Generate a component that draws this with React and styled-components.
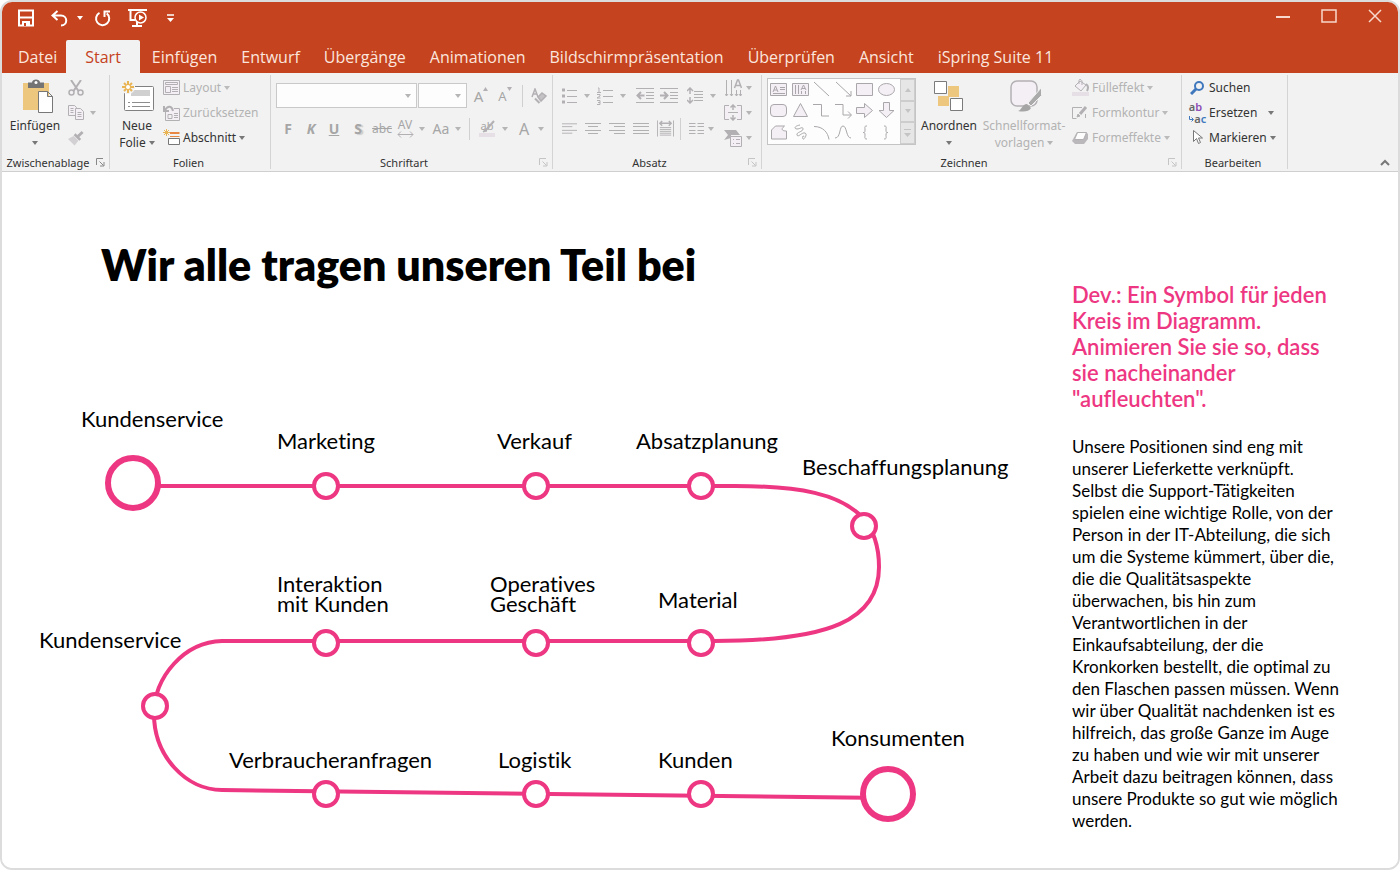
import React from 'react'
import styled, { createGlobalStyle, css } from 'styled-components'

const BRAND = '#c5431e'
const PINK = '#ee3782'
const GREY = '#b3b0b3'
const PALE = '#f4eff5'

const GlobalStyle = createGlobalStyle`
  * {
    box-sizing: border-box;
  }
  body {
    margin: 0;
    background: #fff;
    font-family: 'Noto Sans', sans-serif;
  }
  button,
  input {
    font: inherit;
  }
`

const plainButton = css`
  display: flex;
  align-items: center;
  margin: 0;
  padding: 0;
  border: 0;
  background: none;
  color: ${(p) => (p.$off ? '#b3b3b3' : '#333')};
  cursor: pointer;
`

const Window = styled.div`
  display: flex;
  flex-direction: column;
  min-height: 100vh;
  border: 2px solid #dcdcdc;
  border-radius: 12px;
  overflow: hidden;
`

const TitleBar = styled.header`
  display: flex;
  justify-content: space-between;
  height: 38px;
  padding: 0 14px 6px 9px;
  background: ${BRAND};
`

const QuickAccess = styled.div`
  display: flex;
  align-items: center;
`

const TitleButton = styled.button`
  ${plainButton}
  justify-content: center;
  width: ${(p) => p.$w}px;
`

const WindowButtons = styled.div`
  display: flex;
  align-items: center;
  gap: 28px;
  padding-bottom: 4px;
`

const Tabs = styled.nav`
  display: flex;
  height: 33px;
  padding-left: 4px;
  background: ${BRAND};
`

const Tab = styled.button`
  ${plainButton}
  padding: 0 ${(p) => (p.$active ? 19 : 12)}px;
  font-family: 'Open Sans', 'Noto Sans', sans-serif;
  font-size: 16px;
  line-height: 22px;
  white-space: nowrap;
  color: ${(p) => (p.$active ? BRAND : '#fbe6df')};
  background: ${(p) => (p.$active ? '#f2f2f2' : 'none')};
  border-radius: 2px 2px 0 0;

  &:first-child {
    padding-right: 9px;
  }
`

const RibbonBar = styled.div`
  display: flex;
  height: 99px;
  padding: 2px 0;
  background: #f2f2f2;
  border-bottom: 1px solid #cfcfcf;
`

const Group = styled.section`
  display: flex;
  flex-direction: column;
  flex: none;
  width: ${(p) => p.$w}px;
  border-right: 1px solid #d4d4d4;
`

const GroupBody = styled.div`
  display: flex;
  flex: none;
  height: 78px;
  padding-left: ${(p) => p.$pad || 0}px;
`

const GroupFoot = styled.footer`
  display: flex;
  align-items: center;
  height: 16px;
  margin-top: 1px;
  padding-right: 3px;
`

const GroupName = styled.span`
  flex: 1;
  padding-top: 2px;
  text-align: center;
  font-size: 11px;
  line-height: 16px;
  color: #333;
  white-space: nowrap;
`

const Launcher = styled.button`
  ${plainButton}
  justify-content: center;
  width: 12px;
  height: 14px;
`

const Column = styled.div`
  display: flex;
  flex-direction: column;
  padding-left: ${(p) => p.$pad || 0}px;
`

const ToolRow = styled.div`
  display: flex;
  align-items: center;
  height: ${(p) => p.$h || 33}px;
`

const FormatRows = styled.div`
  display: flex;
  flex-direction: column;
  padding-top: 4px;
`

const BigButton = styled.button`
  ${plainButton}
  flex-direction: column;
  width: ${(p) => p.$w}px;
  font-size: 12px;
  line-height: 17px;
  white-space: nowrap;
`

const BigIcon = styled.span`
  display: flex;
  align-items: center;
  height: 42px;
  padding-left: ${(p) => p.$pad || 0}px;
`

const Line = styled.span`
  display: flex;
  align-items: center;
  justify-content: center;
  height: 17px;
  gap: 3px;
`

const RowButton = styled.button`
  ${plainButton}
  height: 25px;
  font-size: 12px;
  line-height: 18px;
  white-space: nowrap;
  gap: 3px;
`

const RowIcon = styled.span`
  display: flex;
  align-items: center;
  justify-content: center;
  width: 17px;
`

const Tool = styled.button`
  ${plainButton}
  justify-content: center;
  flex: none;
  width: ${(p) => p.$w}px;
  height: 24px;
  font-size: ${(p) => p.$size || 13}px;
  line-height: 18px;
  color: #a6a6a6;
`

const Divider = styled.span`
  flex: none;
  width: 1px;
  height: 22px;
  margin: 0 ${(p) => p.$gap || 6}px;
  background: #d0d0d0;
`

const Combo = styled.label`
  display: flex;
  align-items: center;
  width: ${(p) => p.$w}px;
  height: 25px;
  margin-right: 1px;
  padding-right: 5px;
  border: 1px solid #c9c9c9;
  background: #fdfdfd;
`

const ComboInput = styled.input`
  flex: 1;
  min-width: 0;
  height: 20px;
  border: 0;
  outline: 0;
  background: none;
  font-size: 12px;
`

const Gallery = styled.div`
  display: flex;
  width: 149px;
  height: 67px;
  margin-top: 3px;
  border: 1px solid #c4c4c4;
  background: #fdfdfd;
`

const Shapes = styled.div`
  display: grid;
  flex: 1;
  grid-template-columns: repeat(6, 1fr);
  grid-template-rows: repeat(3, 1fr);
  padding: 0 3px 1px 0;
`

const Shape = styled.button`
  ${plainButton}
  justify-content: center;
`

const GalleryScroll = styled.div`
  display: grid;
  grid-template-rows: repeat(3, 1fr);
  width: 15px;
  background: #e6e6e6;
`

const ScrollButton = styled.button`
  ${plainButton}
  justify-content: center;
  border: 1px solid #cdcdcd;
`

const Collapse = styled.button`
  ${plainButton}
  align-self: flex-end;
  margin-left: auto;
  padding: 0 8px 3px 0;
`

const Slide = styled.main`
  display: flex;
  flex: 1;
  background: #fff;
  color: #000;
  font-family: Lato, sans-serif;
  font-variant-ligatures: none;
`

const Content = styled.div`
  flex: 1;
  min-width: 0;
  padding-top: 67px;
`

const Title = styled.h1`
  margin: 0 0 67px;
  padding-left: 99px;
  font-size: 43px;
  line-height: 52px;
  font-weight: 800;
  white-space: nowrap;
`

const Board = styled.div`
  position: relative;
`

const Route = styled.svg`
  display: block;
`

const Label = styled.span`
  position: absolute;
  left: ${(p) => p.$x}px;
  top: ${(p) => p.$y}px;
  font-size: 22px;
  line-height: 20px;
  white-space: pre;
`

const Notes = styled.aside`
  flex: none;
  width: 326px;
  padding-top: 110px;
`

const NotesTitle = styled.h2`
  margin: 0 0 24px;
  font-size: 22px;
  line-height: 26px;
  font-weight: 600;
  color: ${PINK};
  white-space: pre-line;
`

const NotesText = styled.p`
  margin: 0;
  font-size: 17px;
  line-height: 22px;
  white-space: pre-line;
`

const Icon = ({ w, h, color = GREY, children }) => (
  <svg width={w} height={h} viewBox={`0 0 ${w} ${h}`} fill="none" stroke={color} aria-hidden="true">
    {children}
  </svg>
)

const Caret = ({ color = '#b5b5b5' }) => (
  <Icon w={6} h={4}>
    <path d="M0 0h6L3 4z" fill={color} stroke="none" />
  </Icon>
)

const tools = {
  save: (
    <Icon w={18} h={18} color="#fff">
      <path d="M2 1.500h14v15H2zM2 8.500h14" strokeWidth="2" />
      <path d="M5 12h8v5H5z" fill="#fff" stroke="none" />
      <path d="M7 14h2v3H7z" fill={BRAND} stroke="none" />
    </Icon>
  ),
  undo: (
    <Icon w={17} h={17} color="#fff">
      <path d="M6.500 1L1.500 5.500l5 4.500M2 5.500h8c7 0 7 10 0 10" strokeWidth="2" />
    </Icon>
  ),
  redo: (
    <Icon w={17} h={17} color="#fff">
      <path d="M5.500 2.800a6.600 6.600 0 1 0 7.200.6M10.500 7V1.500H16" strokeWidth="2" />
    </Icon>
  ),
  present: (
    <Icon w={21} h={20} color="#fff">
      <path d="M1 2h19M3.500 2v10H8M10 14v4M5 18h10" strokeWidth="2" />
      <circle cx="13.500" cy="9.500" r="5.500" strokeWidth="1.500" fill={BRAND} />
      <path d="M12 6.500l5 3-5 3z" fill="#fff" stroke="none" />
    </Icon>
  ),
  more: (
    <Icon w={7} h={8} color="#fff">
      <path d="M0 1h7" strokeWidth="1.500" />
      <path d="M0 4h7L3.500 8z" fill="#fff" stroke="none" />
    </Icon>
  ),
  paste: (
    <Icon w={32} h={34}>
      <path d="M1 4h26v27H1z" fill="#edc77d" stroke="none" />
      <path d="M6 3.500h4c0-4 8-4 8 0h4V9H6z" fill="#747474" stroke="none" />
      <circle cx="14" cy="3.500" r="1.500" fill="#fff" stroke="none" />
      <path d="M16.500 12.500h9l5 5v16h-14zM25.500 12.500v5h5" fill="#fff" stroke="#777" />
    </Icon>
  ),
  cut: (
    <Icon w={16} h={16}>
      <path d="M3 0l7.500 11M13 0L5.500 11" strokeWidth="2" />
      <circle cx="3.500" cy="12.500" r="2.500" strokeWidth="1.500" />
      <circle cx="12.500" cy="12.500" r="2.500" strokeWidth="1.500" />
    </Icon>
  ),
  copy: (
    <Icon w={16} h={15}>
      <path d="M.5.500h6l2 2v8h-8zM2.500 3.500h3M2.500 5.500h3M2.500 7.500h3" fill={PALE} />
      <path d="M7.500 3.500h5l3 3v8h-8zM9.500 7.500h4M9.500 9.500h4M9.500 11.500h4" fill={PALE} />
    </Icon>
  ),
  brush: (
    <Icon w={17} h={16}>
      <path d="M0 9l6-3 5 5-4 5z" fill="#d3d0d3" stroke="none" />
      <path d="M6 5l2-2 6 6-2 2z" fill={GREY} stroke="none" />
      <path d="M10.500 6.500L15.500 1.500" strokeWidth="3" />
    </Icon>
  ),
  slide: (
    <Icon w={33} h={32}>
      <rect x="3.500" y="6.500" width="29" height="24" rx="1" fill="#fff" stroke="#808080" />
      <path d="M10 10h19v6H10z" fill="#d0d0d0" stroke="none" />
      <path d="M7 22.500h2M11 22.500h18M7 26.500h2M11 26.500h18" stroke="#8d8d8d" />
      <path d="M7 0v14M0 7h14M2 2l10 10M12 2L2 12" stroke="#f2f2f2" strokeWidth="4" />
      <path d="M7 1v12M1 7h12M3 3l8 8M11 3l-8 8" stroke="#e9b453" strokeWidth="2" />
      <circle cx="7" cy="7" r="2" fill="#fff" stroke="none" />
    </Icon>
  ),
  layout: (
    <Icon w={17} h={15}>
      <path d="M.5.500h16v14H.500zM2.500 2.500h12v2h-12zM2.500 6.500h5v6h-5zM9 7.500h6M9 9.500h6M9 11.500h6" fill={PALE} />
    </Icon>
  ),
  reset: (
    <Icon w={17} h={16}>
      <path d="M2.500 7v8.500h14v-12H11M5 9.500h4v4H5zM11 8.500h4M11 10.500h4M11 12.500h4" fill={PALE} />
      <path d="M2 5c3-5 7-4 8 1M1 1v5h5" strokeWidth="2" />
    </Icon>
  ),
  section: (
    <Icon w={17} h={17}>
      <path d="M7 4h9.500" stroke="#e88741" strokeWidth="2" />
      <path d="M7 7.500h9.500" stroke="#e88741" />
      <path d="M5.500 9.500h11v6h-11z" fill="#fff" stroke="#777" />
      <path d="M3.500 0v7M0 3.500h7M1 1l5 5M6 1L1 6" stroke="#e9b453" />
    </Icon>
  ),
  erase: (
    <Icon w={16} h={16}>
      <path d="M1 9l3-8 3 8M2 6h4" strokeWidth="1.500" />
      <path d="M7 9l4-4 4 3-5 5z" fill="#c5c2c5" strokeWidth="1.500" />
      <path d="M4 10.500l4.500 4.500" strokeWidth="2" />
    </Icon>
  ),
  spacing: (
    <Icon w={17} h={7}>
      <path d="M1 3.500h15M4 .5l-3 3 3 3M13 .5l3 3-3 3" />
    </Icon>
  ),
  marker: (
    <Icon w={18} h={17}>
      <path d="M1 13h16v4H1z" fill="#e6dfe6" stroke="none" />
      <path d="M8 10l8-9" strokeWidth="2" />
      <path d="M5 12l4-1-2-2z" fill={GREY} />
    </Icon>
  ),
  bullets: (
    <Icon w={15} h={16}>
      <path d="M0 2h3M0 8h3M0 14h3" strokeWidth="3" />
      <path d="M5 2.500h10M5 8.500h10M5 14.500h10" />
    </Icon>
  ),
  numbers: (
    <Icon w={16} h={18}>
      <path d="M1 1h1v4M0 5.500h4M0 7.500h3v1.500L0 11h3.500M0 13.500h3v4H0M1 15.500h2M6 3.500h10M6 9.500h10M6 15.500h10" />
    </Icon>
  ),
  outdent: (
    <Icon w={18} h={15}>
      <path d="M0 .5h18M10 4.500h8M10 7.500h8M10 10.500h8M0 14.500h18" />
      <path d="M8.500 7.500H1M5 4L1.500 7.500 5 11" strokeWidth="2" />
    </Icon>
  ),
  indent: (
    <Icon w={18} h={15}>
      <path d="M0 .5h18M10 4.500h8M10 7.500h8M10 10.500h8M0 14.500h18" />
      <path d="M0 7.500h7M4 4l3.500 3.500L4 11" strokeWidth="2" />
    </Icon>
  ),
  leading: (
    <Icon w={16} h={17}>
      <path d="M3 1v6M0 4l3-3 3 3M3 10v6M0 13l3 3 3-3" strokeWidth="1.500" />
      <path d="M7 4.500h9M7 7.500h9M7 10.500h9M7 13.500h9" />
    </Icon>
  ),
  textDir: (
    <Icon w={17} h={18}>
      <path d="M1.500 1v16M6.500 1v16M11.500 11v6M15.500 11v6M0 15l1.500 2L3 15M5 15l1.500 2L8 15M10 15l1.500 2 1.500-2M14 15l1.500 2 1.500-2" />
      <path d="M9.500 9l3-8h1l3 8M10.500 6.500h5" strokeWidth="1.500" />
    </Icon>
  ),
  textAlign: (
    <Icon w={18} h={17}>
      <path d="M5 1.500H.5v14H5M13 1.500h4.500v14H13" fill={PALE} />
      <path d="M9 1v5M6.500 3.500L9 1l2.500 2.500M9 11v5M6.500 13.500L9 16l2.500-2.500" strokeWidth="1.500" />
      <path d="M4 8.500h10" />
    </Icon>
  ),
  smart: (
    <Icon w={18} h={18}>
      <path d="M0 1h12l4 5H7v3l-7 2 4-5z" fill={GREY} stroke="none" />
      <path d="M6.500 7.500h11v10h-11z" fill={PALE} />
      <path d="M9 10.500h1M12 10.500h4M9 14.500h1M12 14.500h4" />
    </Icon>
  ),
  columns: (
    <Icon w={15} h={11}>
      <path d="M0 .5h6.500M0 3.500h6.500M0 7.500h6.500M0 10.500h6.500M8.500.500H15M8.500 3.500H15M8.500 7.500H15M8.500 10.500H15" />
    </Icon>
  ),
  distribute: (
    <Icon w={18} h={17}>
      <path d="M.5 0v17M17.500 0v17M3 7.500h12M3 9.500h12M3 11.500h12M3 13.500h12M3 15.500h12" />
      <path d="M3 3h12M5.500.500L3 3l2.500 2.500M12.500.500L15 3l-2.500 2.500" strokeWidth="1.500" />
    </Icon>
  ),
  arrange: (
    <Icon w={31} h={31}>
      <path d="M14 5h11v11H14zM4 15h11v10H4z" fill="#edc77d" stroke="none" />
      <path d="M.5.500h12v12H.500zM16.500 17.500h12v12h-12z" fill="#fff" stroke="#7b7b7b" />
    </Icon>
  ),
  styles: (
    <Icon w={33} h={33}>
      <rect x="1" y="1" width="26" height="25" rx="6" fill={PALE} strokeWidth="1.500" />
      <path d="M31.500 7.500v8L21 26l-3-3z" fill="#aaa" stroke="#f2f2f2" />
      <path d="M8 31c4-1 4-7 9-7l4 4c-2 4-8 4-13 3z" fill="#a5a5a5" stroke="none" />
    </Icon>
  ),
  fill: (
    <Icon w={17} h={17}>
      <path d="M0 13h17v4H0z" fill="#e6dfe6" stroke="none" />
      <path d="M3 7l5-5 6 4-5 6zM7 5V1.500c0-2 3-1 3 1V6" fill={PALE} />
      <path d="M14 5c3 2 2 5 1 7" strokeWidth="2" />
    </Icon>
  ),
  outline: (
    <Icon w={17} h={14}>
      <path d="M10 1.500H.500v11h4M13.500 8v4" />
      <path d="M8 8l6-7" strokeWidth="3" />
      <path d="M5 11l1-3 2 2z" fill={GREY} />
    </Icon>
  ),
  effects: (
    <Icon w={17} h={14}>
      <path d="M5 1h9l2 2v5l-4 5H3l-3-3z" fill="#bbb8bb" stroke="none" />
      <path d="M5.500 1.500h9l-3 7h-9z" fill="#fdfdfd" />
    </Icon>
  ),
  search: (
    <Icon w={15} h={14} color="#3f78bd">
      <circle cx="9" cy="5" r="4" strokeWidth="2" />
      <path d="M6 8l-5 5" strokeWidth="3" />
    </Icon>
  ),
  pointer: (
    <Icon w={11} h={17} color="#777">
      <path d="M1.500 1.500v11l3-3 2 5 2-1-2-4.500h4z" fill="#fff" />
    </Icon>
  ),
}

const alignIcon = (rows) => (
  <Icon w={16} h={11}>
    {rows.map(([from, to], i) => (
      <path key={i} d={`M${from} ${[0, 3, 7, 10][i] + 0.5}H${to}`} />
    ))}
  </Icon>
)

const LEFT = [[0, 16], [0, 11], [0, 16], [0, 11]]
const CENTER = [[0, 16], [3, 13], [0, 16], [3, 13]]
const RIGHT = [[0, 16], [5, 16], [0, 16], [5, 16]]
const FULL = [[0, 16], [0, 16], [0, 16], [0, 16]]

const SHAPES = [
  { name: 'Textfeld', d: 'M.5 2.500h16v12H.500zM3 11l2.500-6L8 11M4 9h3M10 6.500h5M10 8.500h5M3 12.500h12', fill: true },
  { name: 'Vertikales Textfeld', d: 'M.5 2.500h16v12H.500zM3.500 4v9M6.500 4v9M9 9l2.500-5L14 9M10 7.500h3M9.500 10v3M13.500 10v3', fill: true },
  { name: 'Linie', d: 'M1 1l15 14' },
  { name: 'Pfeil', d: 'M1 1l15 14M16 10v5h-5' },
  { name: 'Rechteck', d: 'M.5 2.500h16v12H.500z', fill: true },
  { name: 'Ellipse', d: 'M.5 8.500a8 6 0 0 1 16 0a8 6 0 0 1-16 0z', fill: true },
  { name: 'Abgerundetes Rechteck', d: 'M4 2.500h9q3.500 0 3.500 3.500v5q0 3.500-3.500 3.500H4Q.5 14.500.500 11V6Q.5 2.500 4 2.500z', fill: true },
  { name: 'Dreieck', d: 'M8.500 1.500l7 13h-14z', fill: true },
  { name: 'Winkel', d: 'M0 2.500h8.500v11.500H16' },
  { name: 'Winkelpfeil', d: 'M0 2.500h8v10.500h8M13 9.500l3.500 3.500-3.500 3.500' },
  { name: 'Pfeil nach rechts', d: 'M.5 5.500h8v-4l8 7-8 7v-4h-8z', fill: true },
  { name: 'Pfeil nach unten', d: 'M5.500.500h6v8h4.500l-7.500 7-7.500-7h4.500z', fill: true },
  { name: 'Freihandform', d: 'M1.500 15V6l4-4h9c-5 4-1 5 2 5v8z', fill: true },
  { name: 'Skizze', d: 'M8 1C2 2 2 5 5 5s6-3 6 0-7 3-6 6 5-3 8-2-1 7-2 6 0-5 1-2' },
  { name: 'Bogen', d: 'M1 2.500c9 0 14 6 15 13' },
  { name: 'Kurve', d: 'M0 14c6 0 4-12 8-12s3 12 8 12' },
  { name: 'Klammer links', d: 'M11 2c-3 0-2 1-2 4s-1 2.500-2 2.500c1 0 2 0 2 2.500s-1 4 2 4' },
  { name: 'Klammer rechts', d: 'M6 2c3 0 2 1 2 4s1 2.500 2 2.500c-1 0-2 0-2 2.500s1 4-2 4' },
]

const STOPS = [
  { x: 133, y: 483, big: true },
  { x: 326, y: 486 },
  { x: 536, y: 486 },
  { x: 701, y: 486 },
  { x: 864, y: 526 },
  { x: 326, y: 643 },
  { x: 536, y: 643 },
  { x: 701, y: 643 },
  { x: 155, y: 706 },
  { x: 326, y: 794 },
  { x: 536, y: 794 },
  { x: 701, y: 794 },
  { x: 888, y: 794, big: true },
]

const LABELS = [
  { x: 79, y: 51, text: 'Kundenservice' },
  { x: 275, y: 73, text: 'Marketing' },
  { x: 495, y: 73, text: 'Verkauf' },
  { x: 634, y: 73, text: 'Absatzplanung' },
  { x: 800, y: 99, text: 'Beschaffungsplanung' },
  { x: 275, y: 216, text: 'Interaktion\nmit Kunden' },
  { x: 488, y: 216, text: 'Operatives\nGeschäft' },
  { x: 656, y: 232, text: 'Material' },
  { x: 37, y: 272, text: 'Kundenservice' },
  { x: 227, y: 392, text: 'Verbraucheranfragen' },
  { x: 496, y: 392, text: 'Logistik' },
  { x: 656, y: 392, text: 'Kunden' },
  { x: 829, y: 370, text: 'Konsumenten' },
]

const TABS = [
  'Datei',
  'Start',
  'Einfügen',
  'Entwurf',
  'Übergänge',
  'Animationen',
  'Bildschirmpräsentation',
  'Überprüfen',
  'Ansicht',
  'iSpring Suite 11',
]

const NOTES_TITLE = `Dev.: Ein Symbol für jeden
Kreis im Diagramm.
Animieren Sie sie so, dass
sie nacheinander
"aufleuchten".`

const NOTES_TEXT = `Unsere Positionen sind eng mit
unserer Lieferkette verknüpft.
Selbst die Support-Tätigkeiten
spielen eine wichtige Rolle, von der
Person in der IT-Abteilung, die sich
um die Systeme kümmert, über die,
die die Qualitätsaspekte
überwachen, bis hin zum
Verantwortlichen in der
Einkaufsabteilung, der die
Kronkorken bestellt, die optimal zu
den Flaschen passen müssen. Wenn
wir über Qualität nachdenken ist es
hilfreich, das große Ganze im Auge
zu haben und wie wir mit unserer
Arbeit dazu beitragen können, dass
unsere Produkte so gut wie möglich
werden.`

const RibbonGroup = ({ name, w, pad, off, launcher = true, children }) => (
  <Group $w={w}>
    <GroupBody $pad={pad}>{children}</GroupBody>
    <GroupFoot>
      <GroupName>{name}</GroupName>
      {launcher && (
        <Launcher aria-label={`${name} öffnen`}>
          <Icon w={9} h={9} color={off ? '#c4c4c4' : '#888'}>
            <path d="M.5 7V.500H7M3.500 3.500l4 4M8 4v4H4" />
          </Icon>
        </Launcher>
      )}
    </GroupFoot>
  </Group>
)

const IconTool = ({ icon, label, w, children, size }) => (
  <Tool $w={w} $size={size} aria-label={label}>
    {icon}
    {children}
  </Tool>
)

const Menu = ({ w = 12, label = 'Optionen' }) => (
  <Tool $w={w} aria-label={label}>
    <Caret />
  </Tool>
)

const Item = ({ icon, text, off, caret = true }) => (
  <RowButton $off={off}>
    <RowIcon>{icon}</RowIcon>
    {text}
    {caret && <Caret color={off ? '#bbb' : '#777'} />}
  </RowButton>
)

const Strike = styled.s`
  font-size: 12px;
`

const Shadowed = styled.b`
  text-shadow: 2px 1px 1px #ccc;
`

const Stacked = styled.span`
  display: flex;
  flex-direction: column;
  align-items: center;
  font-size: 12px;
  line-height: 12px;
`

const Overlaid = styled.span`
  display: grid;
  font-size: 11px;
  line-height: 12px;

  > * {
    grid-area: 1 / 1;
  }
`

const Sup = styled.span`
  align-self: flex-start;
  display: flex;
  padding-top: 3px;
`

const Replace = styled.span`
  display: flex;
  flex-direction: column;
  align-items: flex-end;
  font-size: 11px;
  line-height: 12px;
  font-weight: 600;
  color: #666;
  white-space: nowrap;
`

const Purple = styled.span`
  color: #8c4bb5;
`

const Blue = styled.span`
  color: #3f78bd;
`

const ReplaceLow = styled.span`
  display: flex;
  align-items: center;
`

const ReplaceHigh = styled.span`
  padding-right: 4px;
`

const Trailing = styled.span`
  display: flex;
  padding-left: 8px;
`

const Ribbon = () => (
  <RibbonBar>
    <RibbonGroup name="Zwischenablage" w={108}>
      <BigButton $w={66}>
        <BigIcon $pad={6}>{tools.paste}</BigIcon>
        <Line>Einfügen</Line>
        <Line><Caret color="#777" /></Line>
      </BigButton>
      <Column>
        <ToolRow $h={25}><IconTool label="Ausschneiden" w={16} icon={tools.cut} /></ToolRow>
        <ToolRow $h={25}>
          <IconTool label="Kopieren" w={16} icon={tools.copy} />
          <Menu w={18} />
        </ToolRow>
        <ToolRow $h={25}><IconTool label="Format übertragen" w={16} icon={tools.brush} /></ToolRow>
      </Column>
    </RibbonGroup>

    <RibbonGroup name="Folien" w={161} pad={8} launcher={false}>
      <BigButton $w={38}>
        <BigIcon>{tools.slide}</BigIcon>
        <Line>Neue</Line>
        <Line>Folie<Caret color="#777" /></Line>
      </BigButton>
      <Column $pad={7}>
        <Item icon={tools.layout} text="Layout" off />
        <Item icon={tools.reset} text="Zurücksetzen" off caret={false} />
        <Item icon={tools.section} text="Abschnitt" />
      </Column>
    </RibbonGroup>

    <RibbonGroup name="Schriftart" w={282} pad={5} off>
      <FormatRows>
        <ToolRow>
          <Combo $w={141}>
            <ComboInput aria-label="Schriftart" />
            <Caret />
          </Combo>
          <Combo $w={49}>
            <ComboInput aria-label="Schriftgrad" />
            <Caret />
          </Combo>
          <IconTool label="Schrift vergrößern" w={26} size={15}>
            A<Sup><Icon w={5} h={4}><path d="M0 4h5L2.500 0z" fill={GREY} stroke="none" /></Icon></Sup>
          </IconTool>
          <IconTool label="Schrift verkleinern" w={22} size={13}>
            A<Sup><Icon w={5} h={4}><path d="M0 0h5L2.500 4z" fill={GREY} stroke="none" /></Icon></Sup>
          </IconTool>
          <Divider />
          <IconTool label="Formatierung löschen" w={20} icon={tools.erase} />
        </ToolRow>
        <ToolRow>
          <IconTool label="Fett" w={24} size={14}><b>F</b></IconTool>
          <IconTool label="Kursiv" w={22} size={14}><b><i>K</i></b></IconTool>
          <IconTool label="Unterstrichen" w={24} size={14}><b><u>U</u></b></IconTool>
          <IconTool label="Schatten" w={24} size={14}><Shadowed>S</Shadowed></IconTool>
          <IconTool label="Durchgestrichen" w={24}><Strike>abc</Strike></IconTool>
          <IconTool label="Zeichenabstand" w={22}>
            <Stacked><span>AV</span>{tools.spacing}</Stacked>
          </IconTool>
          <Menu w={12} />
          <IconTool label="Groß-/Kleinschreibung" w={26} size={14}>Aa</IconTool>
          <Menu w={7} />
          <Divider $gap={8} />
          <IconTool label="Texthervorhebung" w={18}>
            <Overlaid><span>ab</span>{tools.marker}</Overlaid>
          </IconTool>
          <Menu w={18} />
          <IconTool label="Schriftfarbe" w={20} size={16}>A</IconTool>
          <Menu w={14} />
        </ToolRow>
      </FormatRows>
    </RibbonGroup>

    <RibbonGroup name="Absatz" w={209} pad={9} off>
      <FormatRows>
        <ToolRow>
          <IconTool label="Aufzählung" w={15} icon={tools.bullets} />
          <Menu w={20} />
          <IconTool label="Nummerierung" w={16} icon={tools.numbers} />
          <Menu w={20} />
          <IconTool label="Einzug verkleinern" w={24} icon={tools.outdent} />
          <IconTool label="Einzug vergrößern" w={24} icon={tools.indent} />
          <IconTool label="Zeilenabstand" w={28} icon={tools.leading} />
          <Menu w={8} />
        </ToolRow>
        <ToolRow>
          <IconTool label="Linksbündig" w={15} icon={alignIcon(LEFT)} />
          <IconTool label="Zentriert" w={32} icon={alignIcon(CENTER)} />
          <IconTool label="Rechtsbündig" w={16} icon={alignIcon(RIGHT)} />
          <IconTool label="Blocksatz" w={32} icon={alignIcon(FULL)} />
          <IconTool label="Verteilt" w={17} icon={tools.distribute} />
          <Divider />
          <IconTool label="Spalten" w={18} icon={tools.columns} />
          <Menu w={12} />
        </ToolRow>
      </FormatRows>
      <Column $pad={5}>
        <ToolRow $h={25}><IconTool label="Textrichtung" w={22} icon={tools.textDir} /><Menu w={10} /></ToolRow>
        <ToolRow $h={25}><IconTool label="Text ausrichten" w={22} icon={tools.textAlign} /><Menu w={10} /></ToolRow>
        <ToolRow $h={25}><IconTool label="SmartArt" w={22} icon={tools.smart} /><Menu w={10} /></ToolRow>
      </Column>
    </RibbonGroup>

    <RibbonGroup name="Zeichnen" w={420} pad={5} off>
      <Gallery>
        <Shapes>
          {SHAPES.map((s) => (
            <Shape key={s.name} aria-label={s.name}>
              <Icon w={17} h={17} color="#aaa7aa">
                <path d={s.d} fill={s.fill ? PALE : 'none'} />
              </Icon>
            </Shape>
          ))}
        </Shapes>
        <GalleryScroll>
          <ScrollButton aria-label="Nach oben">
            <Icon w={6} h={4}><path d="M0 4h6L3 0z" fill="#c4c4c4" stroke="none" /></Icon>
          </ScrollButton>
          <ScrollButton aria-label="Nach unten"><Caret color="#c4c4c4" /></ScrollButton>
          <ScrollButton aria-label="Alle Formen">
            <Icon w={7} h={8} color="#c4c4c4">
              <path d="M0 .5h7" />
              <path d="M0 4h7L3.500 8z" fill="#c4c4c4" stroke="none" />
            </Icon>
          </ScrollButton>
        </GalleryScroll>
      </Gallery>
      <BigButton $w={66}>
        <BigIcon>{tools.arrange}</BigIcon>
        <Line>Anordnen</Line>
        <Line><Caret color="#777" /></Line>
      </BigButton>
      <BigButton $w={84} $off>
        <BigIcon $pad={5}>{tools.styles}</BigIcon>
        <Line>Schnellformat-</Line>
        <Line>vorlagen<Caret /></Line>
      </BigButton>
      <Column $pad={6}>
        <Item icon={tools.fill} text="Fülleffekt" off />
        <Item icon={tools.outline} text="Formkontur" off />
        <Item icon={tools.effects} text="Formeffekte" off />
      </Column>
    </RibbonGroup>

    <RibbonGroup name="Bearbeiten" w={106} pad={7} launcher={false}>
      <Column>
        <Item icon={tools.search} text="Suchen" caret={false} />
        <RowButton>
          <RowIcon>
            <Replace>
              <ReplaceHigh>a<Purple>b</Purple></ReplaceHigh>
              <ReplaceLow>
                <Icon w={5} h={6} color="#3f78bd"><path d="M.5 0v3.500H4M2.500 1.500l2 2-2 2" /></Icon>
                <span>a<Blue>c</Blue></span>
              </ReplaceLow>
            </Replace>
          </RowIcon>
          Ersetzen
          <Trailing><Caret color="#777" /></Trailing>
        </RowButton>
        <Item icon={tools.pointer} text="Markieren" />
      </Column>
    </RibbonGroup>

    <Collapse aria-label="Menüband reduzieren">
      <Icon w={10} h={7} color="#777">
        <path d="M1 6l4-4 4 4" strokeWidth="2" />
      </Icon>
    </Collapse>
  </RibbonBar>
)

const App = () => (
  <>
    <GlobalStyle />
    <Window>
      <TitleBar>
        <QuickAccess>
          <TitleButton $w={30} aria-label="Speichern">{tools.save}</TitleButton>
          <TitleButton $w={36} aria-label="Rückgängig">{tools.undo}</TitleButton>
          <TitleButton $w={6} aria-label="Weitere Schritte"><Caret color="#fff" /></TitleButton>
          <TitleButton $w={38} aria-label="Wiederholen">{tools.redo}</TitleButton>
          <TitleButton $w={32} aria-label="Präsentation starten">{tools.present}</TitleButton>
          <TitleButton $w={34} aria-label="Symbolleiste anpassen">{tools.more}</TitleButton>
        </QuickAccess>
        <WindowButtons>
          <TitleButton $w={18} aria-label="Minimieren">
            <Icon w={14} h={14} color="#f8d8cc"><path d="M0 8h14" strokeWidth="2" /></Icon>
          </TitleButton>
          <TitleButton $w={18} aria-label="Maximieren">
            <Icon w={16} h={14} color="#f8d8cc"><path d="M1 1h14v12H1z" strokeWidth="1.500" /></Icon>
          </TitleButton>
          <TitleButton $w={18} aria-label="Schließen">
            <Icon w={14} h={14} color="#f8d8cc"><path d="M1 1l12 12M13 1L1 13" strokeWidth="1.500" /></Icon>
          </TitleButton>
        </WindowButtons>
      </TitleBar>
      <Tabs>
        {TABS.map((t) => (
          <Tab key={t} $active={t === 'Start'}>{t}</Tab>
        ))}
      </Tabs>
      <Ribbon />
      <Slide>
        <Content>
          <Title>Wir alle tragen unseren Teil bei</Title>
          <Board>
            <Route width="1040" height="480" viewBox="2 358 1040 480" fill="none" stroke={PINK}>
              <path
                d="M133 486H735C800 486 840 494 862 517C874 530 879 548 879 567C879 620 830 641 714 641H222C184 642 154 677 154 714C154 756 186 790 222 790L888 798"
                strokeWidth="4"
              />
              {STOPS.map((s) => (
                <circle
                  key={`${s.x}-${s.y}`}
                  cx={s.x}
                  cy={s.y}
                  r={s.big ? 25 : 12}
                  strokeWidth={s.big ? 6 : 4}
                  fill="#fff"
                />
              ))}
            </Route>
            {LABELS.map((l) => (
              <Label key={`${l.x}-${l.y}`} $x={l.x} $y={l.y}>{l.text}</Label>
            ))}
          </Board>
        </Content>
        <Notes>
          <NotesTitle>{NOTES_TITLE}</NotesTitle>
          <NotesText>{NOTES_TEXT}</NotesText>
        </Notes>
      </Slide>
    </Window>
  </>
)

export default App
